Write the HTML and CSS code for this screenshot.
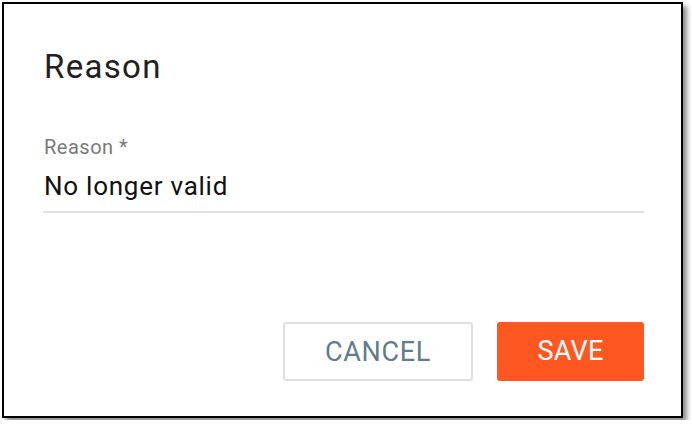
FILE: index.html
```html
<!DOCTYPE html>
<html>
<head>
<meta charset="utf-8">
<link rel="stylesheet" href="styles.css">
</head>
<body>
<div class="page">
  <div class="dialog">
    <h1 class="title">Reason</h1>
    <div class="field">
      <label class="label">Reason *</label>
      <div class="input">No longer valid</div>
    </div>
    <div class="actions">
      <button class="btn btn-cancel">CANCEL</button>
      <button class="btn btn-save">SAVE</button>
    </div>
  </div>
</div>
</body>
</html>
```
FILE: styles.css
```css
html, body {
  margin: 0;
  padding: 0;
  background: #fff;
}
body {
  font-family: Roboto, "Liberation Sans", sans-serif;
}
.page {
  padding: 2px;
}
.dialog {
  box-sizing: border-box;
  width: 681px;
  height: 416px;
  border: 2px solid #000;
  background: #fff;
  box-shadow: 4px 4px 5px rgba(0, 0, 0, 0.45);
  padding: 43px 37px 35px 39px;
  display: flex;
  flex-direction: column;
}
.title {
  margin: 0;
  font-size: 33px;
  line-height: 40px;
  font-weight: 400;
  letter-spacing: 1.3px;
  color: #212121;
  padding-left: 1px;
}
.field {
  margin-top: 48px;
}
.label {
  display: block;
  font-size: 20px;
  line-height: 24px;
  letter-spacing: 0.5px;
  color: #7a7a7a;
  padding-left: 1px;
}
.input {
  margin-top: 11px;
  font-size: 26px;
  line-height: 32px;
  letter-spacing: 0.75px;
  color: #111;
  padding-bottom: 9px;
  padding-left: 1px;
  border-bottom: 2px solid #e2e2e2;
}
.actions {
  margin-top: auto;
  display: flex;
  justify-content: flex-end;
  gap: 24px;
}
.btn {
  box-sizing: border-box;
  height: 59px;
  font-family: Roboto, "Liberation Sans", sans-serif;
  font-size: 27px;
  font-weight: 400;
  border-radius: 3px;
  padding: 0;
  cursor: pointer;
}
.btn-cancel {
  width: 190px;
  background: #fff;
  border: 2px solid #e0e0e0;
  color: #5f7d8c;
  letter-spacing: 0.7px;
}
.btn-save {
  width: 147px;
  background: #ff5722;
  border: none;
  color: #fff;
  padding-bottom: 2px;
  letter-spacing: 0.3px;
}
```
